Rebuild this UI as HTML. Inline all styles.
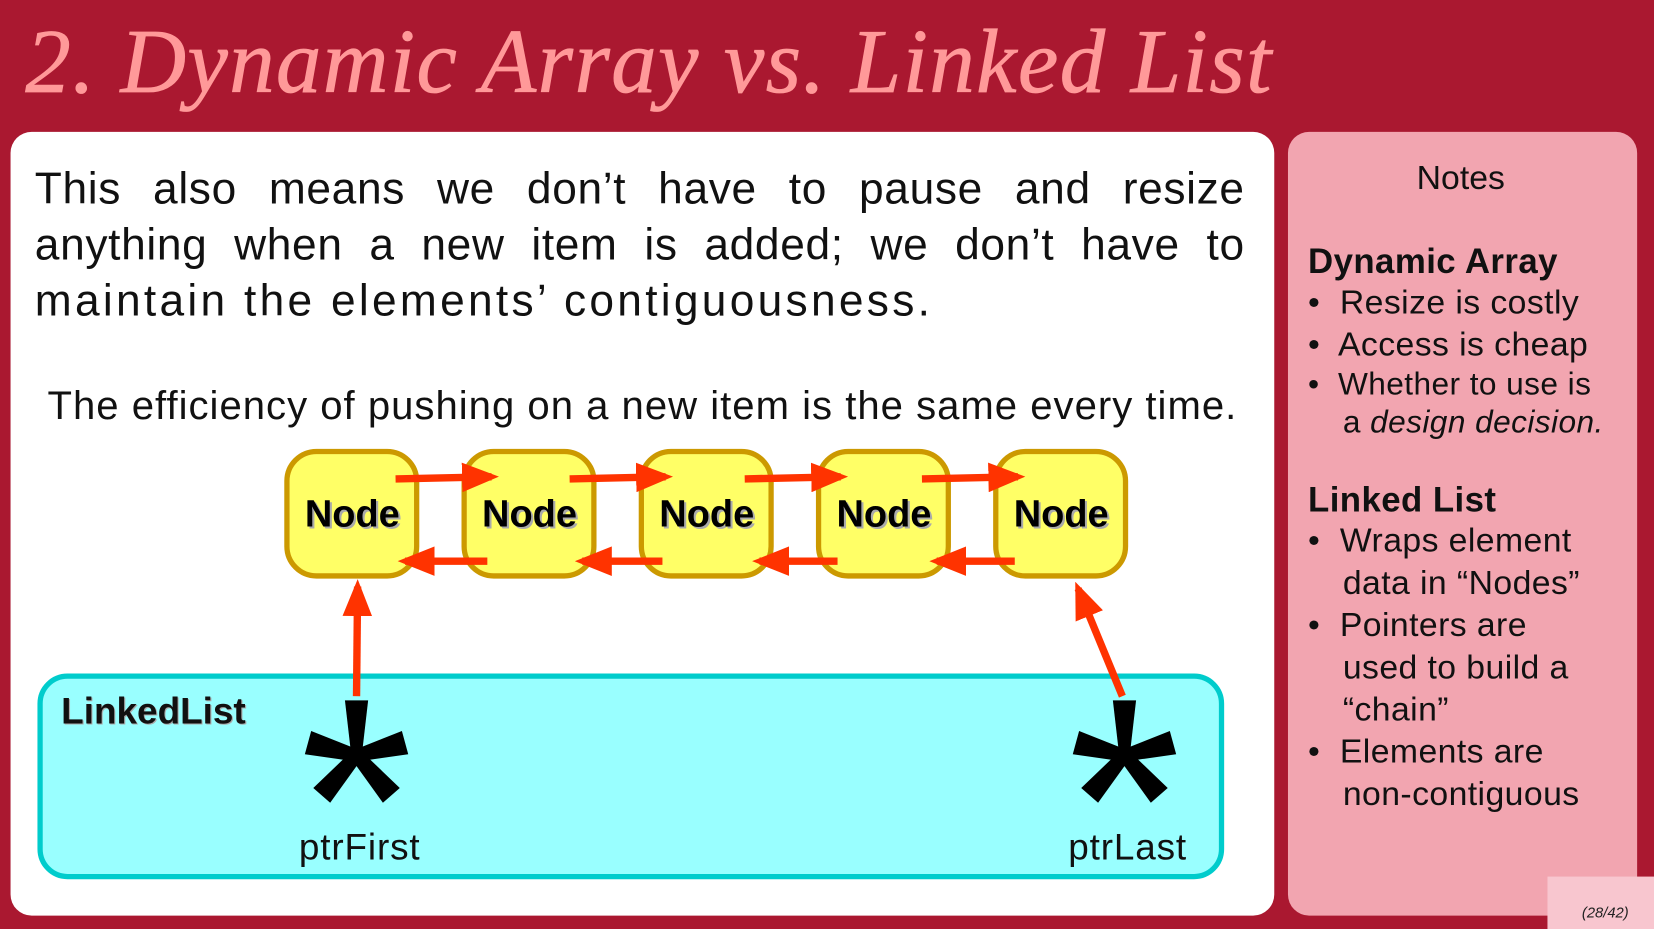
<!DOCTYPE html>
<html><head><meta charset="utf-8"><style>
html,body{margin:0;padding:0;width:1654px;height:929px;overflow:hidden;background:#aa1830}
#s{position:absolute;left:0;top:0;width:1568px;height:881px;transform:scale(1.05485);transform-origin:0 0;font-family:"Liberation Sans",sans-serif}
.t{position:absolute;left:24px;top:8px;font-family:"Liberation Serif",serif;font-style:italic;font-size:86px;color:#ff9999;white-space:nowrap;letter-spacing:1.4px;-webkit-text-stroke:0.8px #ff9999}
.w{position:absolute;left:10px;top:125px;width:1198px;height:743px;background:#fff;border-radius:20px}
.n{position:absolute;left:1221px;top:125px;width:331px;height:743px;background:#f2a5b0;border-radius:20px}
.p{position:absolute;left:33px;top:152px;width:1147px;font-size:42px;line-height:53px;color:#111;letter-spacing:0.6px}
.p div{text-align:justify;text-align-last:justify;white-space:nowrap}
.p div.l{text-align-last:left;letter-spacing:3.1px}
.e{position:absolute;left:10px;width:1198px;top:364px;text-align:center;font-size:38px;letter-spacing:0.95px;color:#111}
.nt{position:absolute;font-size:32px;color:#111;white-space:nowrap}
.b{position:absolute;left:1240px;font-size:32px;letter-spacing:0.4px;color:#111;white-space:nowrap}
.pg{position:absolute;left:1467px;top:831px;width:101px;height:50px;background:#f8c6cf;font-size:14px;font-style:italic;text-align:right;box-sizing:border-box;padding:26px 24px 0 0;color:#222}
</style></head><body><div id="s">
<div class="t">2. Dynamic Array vs. Linked List</div>
<div class="w"></div>
<div class="n"></div>
<div class="p"><div>This also means we don’t have to pause and resize</div><div>anything when a new item is added; we don’t have to</div><div class="l">maintain the elements’ contiguousness.</div></div>
<div class="e">The efficiency of pushing on a new item is the same every time.</div>
<svg style="position:absolute;left:0;top:0" width="1568" height="881">
<defs><marker id="a" markerWidth="5" markerHeight="4" refX="4" refY="2" orient="auto" markerUnits="strokeWidth"><path d="M0,0 L5,2 L0,4 Z" fill="#ff3300"/></marker>
<g id="ast" fill="#000"><polygon points="-5,0 -11,-52 11,-52 5,0"/><polygon points="0,-6 -43,-23 -49,-1 0,6"/><polygon points="0,-6 43,-23 49,-1 0,6"/><polygon points="4.5,4 -25,45 -41,31 -4.5,-4"/><polygon points="-4.5,4 25,45 41,31 4.5,-4"/><circle r="7"/></g></defs>
<rect x="38" y="641" width="1120" height="190" rx="26" fill="#99ffff" stroke="#00cccc" stroke-width="5"/>
<text x="59" y="687" font-family="Liberation Sans" font-weight="bold" font-size="35" fill="#aaa">LinkedList</text>
<text x="58" y="686" font-family="Liberation Sans" font-weight="bold" font-size="35" fill="#111">LinkedList</text>
<g font-family="Liberation Sans" font-weight="bold" font-size="36" text-anchor="middle">
<g id="nd">
<rect x="272" y="428" width="123" height="118" rx="28" fill="#ffff66" stroke="#cc9900" stroke-width="5"/>
<text x="336" y="501" fill="#aaa">Node</text><text x="334" y="499" fill="#000">Node</text></g>
<use href="#nd" x="168"/><use href="#nd" x="336"/><use href="#nd" x="504"/><use href="#nd" x="672"/>
</g>
<g stroke="#ff3300" stroke-width="7" marker-end="url(#a)">
<line x1="375" y1="454" x2="466" y2="452"/><line x1="540" y1="454" x2="631" y2="452"/><line x1="706" y1="454" x2="797" y2="452"/><line x1="874" y1="454" x2="965" y2="452"/>
<line x1="462" y1="532" x2="384" y2="532"/><line x1="628" y1="532" x2="552" y2="532"/><line x1="794" y1="532" x2="720" y2="532"/><line x1="962" y1="532" x2="888" y2="532"/>
<line x1="338" y1="660" x2="339" y2="556"/><line x1="1064" y1="660" x2="1022" y2="558"/>
</g>
<use href="#ast" x="338" y="716"/><use href="#ast" x="1066" y="716"/>
<g font-family="Liberation Sans" font-size="35" letter-spacing="0.8" text-anchor="middle" fill="#111">
<text x="341" y="815">ptrFirst</text><text x="1069" y="815">ptrLast</text></g>
</svg>
<div class="nt" style="left:1343px;top:150px">Notes</div>
<div class="b" style="top:229px;font-weight:bold;font-size:33px">Dynamic Array</div>
<div class="b" style="top:268px">•&nbsp; Resize is costly</div>
<div class="b" style="top:308px">•&nbsp; Access is cheap</div>
<div class="b" style="top:348px;font-size:30px">•&nbsp;&nbsp;Whether to use is</div>
<div class="b" style="top:384px;left:1273px;font-size:30px">a <i>design decision.</i></div>
<div class="b" style="top:455px;font-weight:bold;font-size:33px">Linked List</div>
<div class="b" style="top:494px">•&nbsp; Wraps element</div>
<div class="b" style="top:534px;left:1273px">data in “Nodes”</div>
<div class="b" style="top:574px">•&nbsp; Pointers are</div>
<div class="b" style="top:614px;left:1273px">used to build a</div>
<div class="b" style="top:654px;left:1273px">“chain”</div>
<div class="b" style="top:694px">•&nbsp; Elements are</div>
<div class="b" style="top:734px;left:1273px">non-contiguous</div>
<div class="pg">(28/42)</div>
</div></body></html>
